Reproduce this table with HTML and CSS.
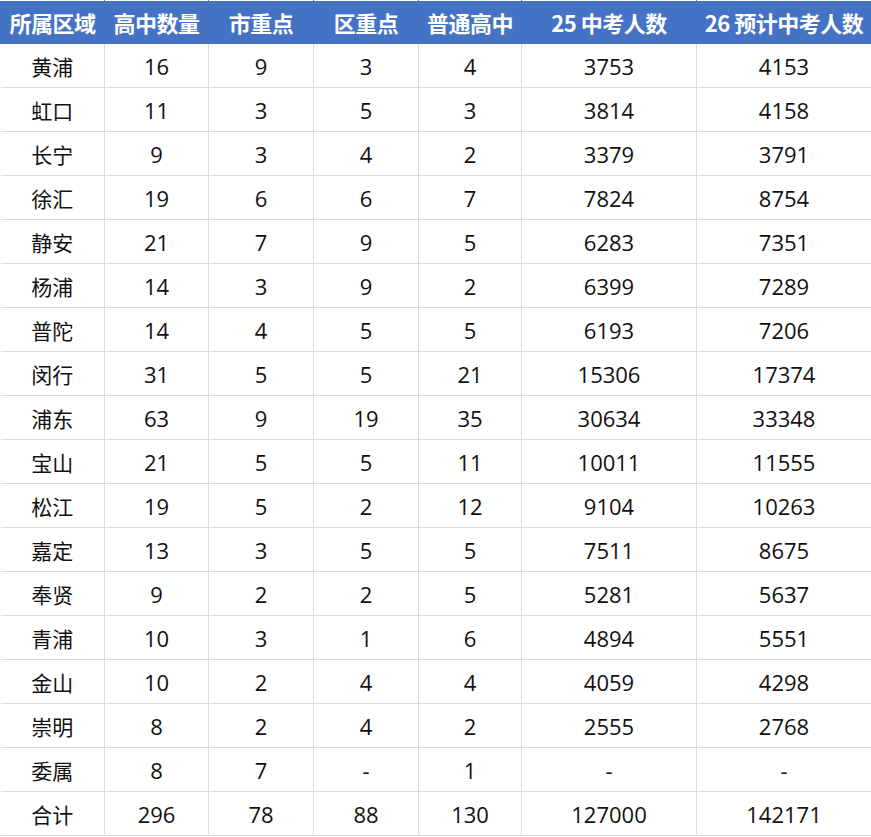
FILE: index.html
```html
<!DOCTYPE html>
<html lang="zh-CN">
<head>
<meta charset="utf-8">
<link rel="stylesheet" href="styles.css">
</head>
<body>
<table class="grid">
<colgroup>
<col class="c1"><col class="c2"><col class="c3"><col class="c4"><col class="c5"><col class="c6"><col class="c7">
</colgroup>
<thead>
<tr><th>所属区域</th><th>高中数量</th><th>市重点</th><th>区重点</th><th>普通高中</th><th>25 中考人数</th><th>26 预计中考人数</th></tr>
</thead>
<tbody>
<tr><td>黄浦</td><td>16</td><td>9</td><td>3</td><td>4</td><td>3753</td><td>4153</td></tr>
<tr><td>虹口</td><td>11</td><td>3</td><td>5</td><td>3</td><td>3814</td><td>4158</td></tr>
<tr><td>长宁</td><td>9</td><td>3</td><td>4</td><td>2</td><td>3379</td><td>3791</td></tr>
<tr><td>徐汇</td><td>19</td><td>6</td><td>6</td><td>7</td><td>7824</td><td>8754</td></tr>
<tr><td>静安</td><td>21</td><td>7</td><td>9</td><td>5</td><td>6283</td><td>7351</td></tr>
<tr><td>杨浦</td><td>14</td><td>3</td><td>9</td><td>2</td><td>6399</td><td>7289</td></tr>
<tr><td>普陀</td><td>14</td><td>4</td><td>5</td><td>5</td><td>6193</td><td>7206</td></tr>
<tr><td>闵行</td><td>31</td><td>5</td><td>5</td><td>21</td><td>15306</td><td>17374</td></tr>
<tr><td>浦东</td><td>63</td><td>9</td><td>19</td><td>35</td><td>30634</td><td>33348</td></tr>
<tr><td>宝山</td><td>21</td><td>5</td><td>5</td><td>11</td><td>10011</td><td>11555</td></tr>
<tr><td>松江</td><td>19</td><td>5</td><td>2</td><td>12</td><td>9104</td><td>10263</td></tr>
<tr><td>嘉定</td><td>13</td><td>3</td><td>5</td><td>5</td><td>7511</td><td>8675</td></tr>
<tr><td>奉贤</td><td>9</td><td>2</td><td>2</td><td>5</td><td>5281</td><td>5637</td></tr>
<tr><td>青浦</td><td>10</td><td>3</td><td>1</td><td>6</td><td>4894</td><td>5551</td></tr>
<tr><td>金山</td><td>10</td><td>2</td><td>4</td><td>4</td><td>4059</td><td>4298</td></tr>
<tr><td>崇明</td><td>8</td><td>2</td><td>4</td><td>2</td><td>2555</td><td>2768</td></tr>
<tr><td>委属</td><td>8</td><td>7</td><td>-</td><td>1</td><td>-</td><td>-</td></tr>
<tr><td>合计</td><td>296</td><td>78</td><td>88</td><td>130</td><td>127000</td><td>142171</td></tr>
</tbody>
</table>
</body>
</html>
```

FILE: styles.css
```css
html, body {
  margin: 0;
  padding: 0;
  background: #ffffff;
}
.grid {
  border-collapse: collapse;
  table-layout: fixed;
  width: 871px;
  font-family: "Open Sans", "Noto Sans CJK SC", sans-serif;
  font-size: 22px;
  color: #111111;
}
.c1 { width: 104px; }
.c2 { width: 104px; }
.c3 { width: 105px; }
.c4 { width: 105px; }
.c5 { width: 103px; }
.c6 { width: 175px; }
.c7 { width: 175px; }
.grid th {
  background: #4472c4;
  color: #ffffff;
  font-family: "Noto Sans CJK SC", sans-serif;
  font-weight: 700;
  font-size: 22px;
  letter-spacing: -0.5px;
  height: 42px;
  padding: 0;
  text-align: center;
  white-space: nowrap;
  border: 1px solid #4472c4;
  border-top: 1px solid #ffffff;
}
.grid td {
  height: 43px;
  padding: 0;
  text-align: center;
  border: 1px solid #dcdcdc;
  border-top: none;
}
.grid td:first-child {
  border-left: none;
  font-family: "Noto Sans CJK SC", sans-serif;
  font-size: 21px;
}
```
